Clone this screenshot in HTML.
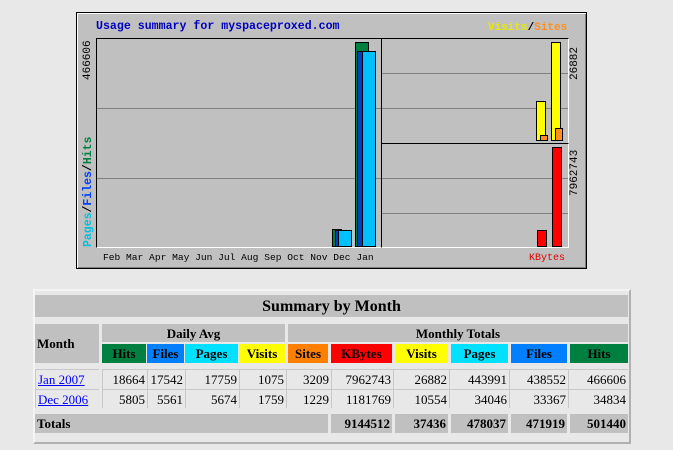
<!DOCTYPE html>
<html><head><meta charset="utf-8"><style>
body{margin:0;width:673px;height:450px;background:#e8e8e8;position:relative;overflow:hidden;font-family:"Liberation Serif",serif}
.a{position:absolute;box-sizing:border-box}
.m{font-family:"Liberation Mono",monospace;font-size:11px;line-height:11px;white-space:nowrap}
.b{position:absolute;box-sizing:border-box;border:1px solid #000}
.g{position:absolute;height:1px;background:#808080}
.c{position:absolute;box-sizing:border-box;font-size:13px;line-height:13px;display:flex;align-items:center;justify-content:center;white-space:nowrap}
.h{background:#c0c0c0;font-weight:bold;color:#000}
.d{background:#e8e8e8;justify-content:flex-end;padding-right:2px;border-top:1px solid #c8c8c8;border-left:1px solid #c8c8c8}
.v{writing-mode:vertical-rl;transform:rotate(180deg)}
</style></head><body>
<!-- chart -->
<div class="a" style="left:76px;top:12px;width:511px;height:257px;background:#c0c0c0;border:1px solid #000;box-shadow:inset 1px 1px 0 #fff,inset -1px -1px 0 #808080"></div>
<div class="a m" style="left:96px;top:21px;color:#0000c0;font-weight:bold;font-size:11.6px">Usage summary for myspaceproxed.com</div>
<div class="a m" style="left:488px;top:23px;font-weight:bold"><span style="color:#e8e800">Visits</span><span style="color:#000">/</span><span style="color:#ff9020">Sites</span></div>
<div class="a" style="left:96px;top:38px;width:286px;height:210px;border:1px solid #000;border-right:1px solid #fff;border-bottom:1px solid #fff"></div>
<div class="a" style="left:381px;top:38px;width:188px;height:106px;border:1px solid #000;border-right:1px solid #fff;border-bottom:1px solid #fff"></div>
<div class="a" style="left:381px;top:143px;width:188px;height:105px;border:1px solid #000;border-right:1px solid #fff;border-bottom:1px solid #fff"></div>
<div class="g" style="left:97px;top:108px;width:284px"></div>
<div class="g" style="left:97px;top:178px;width:284px"></div>
<div class="g" style="left:382px;top:73px;width:186px"></div>
<div class="g" style="left:382px;top:108px;width:186px"></div>
<div class="g" style="left:382px;top:178px;width:186px"></div>
<div class="g" style="left:382px;top:213px;width:186px"></div>
<div class="a m v" style="left:83px;top:38px;height:42px;color:#000;font-size:11px">466606</div>
<div class="a m v" style="left:83px;top:134px;height:113px;font-weight:bold;font-size:11.5px"><span style="color:#00c0e0">Pages</span><span style="color:#000">/</span><span style="color:#0040ff">Files</span><span style="color:#000">/</span><span style="color:#008040">Hits</span></div>
<div class="a m v" style="left:570px;top:40px;height:40px;color:#000;font-size:11px">26882</div>
<div class="a m v" style="left:570px;top:146px;height:50px;color:#000;font-size:11px">7962743</div>
<div class="a m" style="left:103px;top:252px;font-size:9.6px;color:#000;line-height:12px">Feb Mar Apr May Jun Jul Aug Sep Oct Nov Dec Jan</div>
<div class="a m" style="left:529px;top:253px;font-size:10px;color:#e00000;line-height:12px">KBytes</div>
<!-- bars -->
<div class="b" style="left:332px;top:229px;width:10px;height:18px;background:#008040"></div>
<div class="b" style="left:335px;top:230px;width:10px;height:17px;background:#0040c0"></div>
<div class="b" style="left:338px;top:230px;width:14px;height:17px;background:#00c0ff"></div>
<div class="b" style="left:355px;top:42px;width:14px;height:205px;background:#008040"></div>
<div class="b" style="left:357px;top:51px;width:10px;height:196px;background:#0040c0"></div>
<div class="b" style="left:362px;top:51px;width:14px;height:196px;background:#00c0ff"></div>
<div class="b" style="left:536px;top:101px;width:10px;height:40px;background:#ffff00"></div>
<div class="b" style="left:540px;top:135px;width:8px;height:6px;background:#ff9020"></div>
<div class="b" style="left:551px;top:42px;width:10px;height:99px;background:#ffff00"></div>
<div class="b" style="left:555px;top:128px;width:8px;height:13px;background:#ff9020"></div>
<div class="b" style="left:537px;top:230px;width:10px;height:17px;background:#ff0000"></div>
<div class="b" style="left:552px;top:147px;width:10px;height:100px;background:#ff0000"></div>
<!-- table -->
<div class="a" style="left:33px;top:289px;width:598px;height:155px;border:2px solid #f4f4f4;border-right-color:#b0b0b0;border-bottom-color:#b0b0b0"></div>
<div class="c h" style="left:35px;top:295px;width:593px;height:22px;font-size:16px">Summary by Month</div>
<div class="c h" style="left:35px;top:324px;width:64px;height:39px;justify-content:flex-start;padding-left:2px">Month</div>
<div class="c h" style="left:102px;top:324px;width:183px;height:18px">Daily Avg</div>
<div class="c h" style="left:288px;top:324px;width:340px;height:18px">Monthly Totals</div>
<div class="c h" style="left:102px;top:344px;width:44px;height:19px;background:#008040">Hits</div>
<div class="c h" style="left:147px;top:344px;width:37px;height:19px;background:#0080ff">Files</div>
<div class="c h" style="left:185px;top:344px;width:53px;height:19px;background:#00e0ff">Pages</div>
<div class="c h" style="left:239px;top:344px;width:46px;height:19px;background:#ffff00">Visits</div>
<div class="c h" style="left:288px;top:344px;width:40px;height:19px;background:#ff8000">Sites</div>
<div class="c h" style="left:331px;top:344px;width:61px;height:19px;background:#ff0000">KBytes</div>
<div class="c h" style="left:395px;top:344px;width:53px;height:19px;background:#ffff00">Visits</div>
<div class="c h" style="left:451px;top:344px;width:57px;height:19px;background:#00e0ff">Pages</div>
<div class="c h" style="left:511px;top:344px;width:56px;height:19px;background:#0080ff">Files</div>
<div class="c h" style="left:570px;top:344px;width:58px;height:19px;background:#008040">Hits</div>
<!-- rows -->
<div class="c d" style="left:35px;top:369px;width:64px;height:20px;justify-content:flex-start;padding-left:2px"><span style="color:#0000ff;text-decoration:underline">Jan 2007</span></div>
<div class="c d" style="left:102px;top:369px;width:45px;height:20px">18664</div>
<div class="c d" style="left:147px;top:369px;width:38px;height:20px">17542</div>
<div class="c d" style="left:185px;top:369px;width:54px;height:20px">17759</div>
<div class="c d" style="left:239px;top:369px;width:47px;height:20px">1075</div>
<div class="c d" style="left:286px;top:369px;width:45px;height:20px">3209</div>
<div class="c d" style="left:331px;top:369px;width:62px;height:20px">7962743</div>
<div class="c d" style="left:393px;top:369px;width:56px;height:20px">26882</div>
<div class="c d" style="left:449px;top:369px;width:60px;height:20px">443991</div>
<div class="c d" style="left:509px;top:369px;width:59px;height:20px">438552</div>
<div class="c d" style="left:568px;top:369px;width:60px;height:20px">466606</div>
<div class="c d" style="left:35px;top:389px;width:64px;height:19px;justify-content:flex-start;padding-left:2px"><span style="color:#0000ff;text-decoration:underline">Dec 2006</span></div>
<div class="c d" style="left:102px;top:389px;width:45px;height:19px">5805</div>
<div class="c d" style="left:147px;top:389px;width:38px;height:19px">5561</div>
<div class="c d" style="left:185px;top:389px;width:54px;height:19px">5674</div>
<div class="c d" style="left:239px;top:389px;width:47px;height:19px">1759</div>
<div class="c d" style="left:286px;top:389px;width:45px;height:19px">1229</div>
<div class="c d" style="left:331px;top:389px;width:62px;height:19px">1181769</div>
<div class="c d" style="left:393px;top:389px;width:56px;height:19px">10554</div>
<div class="c d" style="left:449px;top:389px;width:60px;height:19px">34046</div>
<div class="c d" style="left:509px;top:389px;width:59px;height:19px">33367</div>
<div class="c d" style="left:568px;top:389px;width:60px;height:19px">34834</div>
<!-- totals -->
<div class="c h" style="left:35px;top:414px;width:293px;height:19px;justify-content:flex-start;padding-left:2px">Totals</div>
<div class="c h" style="left:331px;top:414px;width:61px;height:19px;justify-content:flex-end;padding-right:2px">9144512</div>
<div class="c h" style="left:395px;top:414px;width:53px;height:19px;justify-content:flex-end;padding-right:2px">37436</div>
<div class="c h" style="left:451px;top:414px;width:57px;height:19px;justify-content:flex-end;padding-right:2px">478037</div>
<div class="c h" style="left:511px;top:414px;width:56px;height:19px;justify-content:flex-end;padding-right:2px">471919</div>
<div class="c h" style="left:570px;top:414px;width:58px;height:19px;justify-content:flex-end;padding-right:2px">501440</div>
</body></html>
